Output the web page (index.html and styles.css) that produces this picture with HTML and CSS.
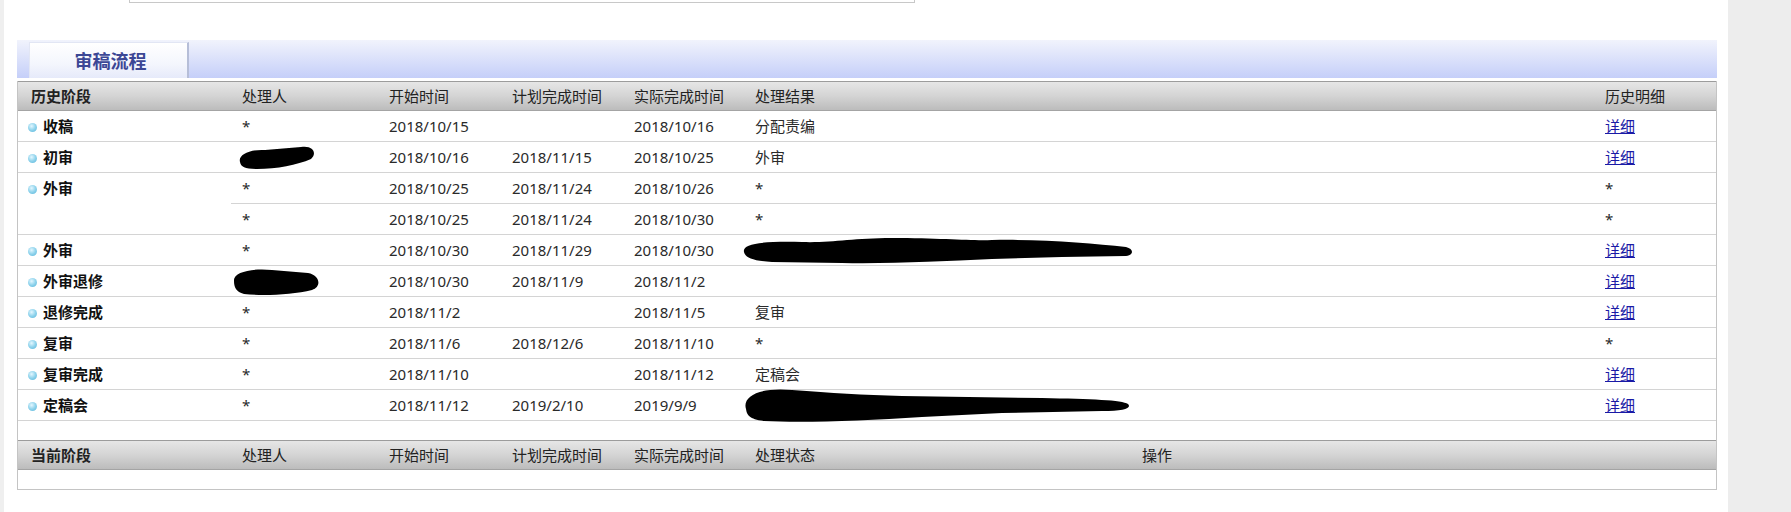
FILE: index.html
```html
<!DOCTYPE html>
<html lang="zh-CN">
<head>
    <meta charset="UTF-8">
    <title>审稿流程</title>
    <link rel="stylesheet" href="styles.css">
</head>
<body>
    <div class="page">
        <div class="main">
            <div class="top-box"></div>

            <div class="panel">
                <div class="tab-bar">
                    <div class="tab">审稿流程</div>
                </div>

                <table class="flow history">
                    <colgroup>
                        <col class="c-stage"><col class="c-user"><col class="c-date"><col class="c-date2"><col class="c-date3"><col class="c-result"><col class="c-detail">
                    </colgroup>
                    <thead>
                        <tr>
                            <th class="first">历史阶段</th>
                            <th>处理人</th>
                            <th>开始时间</th>
                            <th>计划完成时间</th>
                            <th>实际完成时间</th>
                            <th>处理结果</th>
                            <th>历史明细</th>
                        </tr>
                    </thead>
                    <tbody>
                        <tr>
                            <td class="stage"><i class="dot"></i>收稿</td>
                            <td>*</td>
                            <td>2018/10/15</td>
                            <td></td>
                            <td>2018/10/16</td>
                            <td>分配责编</td>
                            <td><a href="#">详细</a></td>
                        </tr>
                        <tr>
                            <td class="stage"><i class="dot"></i>初审</td>
                            <td>
                                <svg class="scribble" width="80" height="30" viewBox="0 0 80 30"><path d="M3 20 C1 13 12 7 28 8 L64 5 C77 3 80 12 74 17 C60 23 40 27 20 27 C8 27 4 25 3 20 Z"/></svg>
                            </td>
                            <td>2018/10/16</td>
                            <td>2018/11/15</td>
                            <td>2018/10/25</td>
                            <td>外审</td>
                            <td><a href="#">详细</a></td>
                        </tr>
                        <tr>
                            <td class="stage" rowspan="2"><i class="dot"></i>外审</td>
                            <td>*</td>
                            <td>2018/10/25</td>
                            <td>2018/11/24</td>
                            <td>2018/10/26</td>
                            <td>*</td>
                            <td>*</td>
                        </tr>
                        <tr>
                            <td>*</td>
                            <td>2018/10/25</td>
                            <td>2018/11/24</td>
                            <td>2018/10/30</td>
                            <td>*</td>
                            <td>*</td>
                        </tr>
                        <tr>
                            <td class="stage"><i class="dot"></i>外审</td>
                            <td>*</td>
                            <td>2018/10/30</td>
                            <td>2018/11/29</td>
                            <td>2018/10/30</td>
                            <td>
                                <svg class="scribble wide" width="392" height="30" viewBox="0 0 392 30"><path d="M2 17 C0 9 18 6 60 7 C90 8 110 3 150 3 C200 3 230 6 250 5 C300 4 350 8 384 12 C392 14 392 20 384 21 L320 22 L250 24 C200 26 150 29 100 28 L30 27 C10 26 3 22 2 17 Z"/></svg>
                            </td>
                            <td><a href="#">详细</a></td>
                        </tr>
                        <tr>
                            <td class="stage"><i class="dot"></i>外审退修</td>
                            <td>
                                <svg class="scribble fat" width="90" height="30" viewBox="0 0 90 30"><path d="M2 15 C1 6 20 2 40 4 L76 7 C88 9 90 21 80 24 C60 29 30 30 12 28 C4 26 2 21 2 15 Z"/></svg>
                            </td>
                            <td>2018/10/30</td>
                            <td>2018/11/9</td>
                            <td>2018/11/2</td>
                            <td></td>
                            <td><a href="#">详细</a></td>
                        </tr>
                        <tr>
                            <td class="stage"><i class="dot"></i>退修完成</td>
                            <td>*</td>
                            <td>2018/11/2</td>
                            <td></td>
                            <td>2018/11/5</td>
                            <td>复审</td>
                            <td><a href="#">详细</a></td>
                        </tr>
                        <tr>
                            <td class="stage"><i class="dot"></i>复审</td>
                            <td>*</td>
                            <td>2018/11/6</td>
                            <td>2018/12/6</td>
                            <td>2018/11/10</td>
                            <td>*</td>
                            <td>*</td>
                        </tr>
                        <tr>
                            <td class="stage"><i class="dot"></i>复审完成</td>
                            <td>*</td>
                            <td>2018/11/10</td>
                            <td></td>
                            <td>2018/11/12</td>
                            <td>定稿会</td>
                            <td><a href="#">详细</a></td>
                        </tr>
                        <tr>
                            <td class="stage"><i class="dot"></i>定稿会</td>
                            <td>*</td>
                            <td>2018/11/12</td>
                            <td>2019/2/10</td>
                            <td>2019/9/9</td>
                            <td>
                                <svg class="scribble wide" width="390" height="30" viewBox="0 0 390 30"><path d="M4 19 C0 6 18 -3 50 0 C90 3 120 5 160 6 L300 8 C350 9 380 10 386 14 C390 18 382 21 360 21 L260 23 L180 27 C120 31 60 33 22 31 C7 29 5 25 4 19 Z"/></svg>
                            </td>
                            <td><a href="#">详细</a></td>
                        </tr>
                        <tr class="spacer">
                            <td colspan="7"></td>
                        </tr>
                    </tbody>
                </table>

                <table class="flow current">
                    <colgroup>
                        <col class="c-stage"><col class="c-user"><col class="c-date"><col class="c-date2"><col class="c-date3"><col class="c-state"><col class="c-op">
                    </colgroup>
                    <thead>
                        <tr>
                            <th class="first">当前阶段</th>
                            <th>处理人</th>
                            <th>开始时间</th>
                            <th>计划完成时间</th>
                            <th>实际完成时间</th>
                            <th>处理状态</th>
                            <th>操作</th>
                        </tr>
                    </thead>
                    <tbody>
                        <tr class="empty">
                            <td colspan="7"></td>
                        </tr>
                    </tbody>
                </table>
            </div>
        </div>
        <div class="side"></div>
    </div>
</body>
</html>
```

FILE: styles.css
```css
html, body {
    margin: 0;
    padding: 0;
    height: 100%;
}
body {
    font-family: "Noto Sans", "Noto Sans CJK SC", sans-serif;
    font-size: 15px;
    color: #222;
    background-color: #fff;
}
.page {
    display: flex;
    height: 100vh;
}
.main {
    flex: 1;
    border-left: 4px solid #efefef;
    padding: 0 11px 0 13px;
}
.side {
    width: 63px;
    background-color: #ededed;
}
.top-box {
    width: 784px;
    height: 2px;
    margin-left: 112px;
    border: 1px solid #c8c8c8;
    border-top: none;
}
.panel {
    margin-top: 37px;
    width: 1700px;
}
.tab-bar {
    height: 36px;
    padding: 2px 0 0 12px;
    background: linear-gradient(to bottom, #f1f3fc, #c5cff9);
    margin-bottom: 3px;
}
.tab {
    width: 160px;
    height: 36px;
    box-sizing: border-box;
    border: 1px solid #e2e6f4;
    border-right: 2px solid #b6bed8;
    border-bottom: none;
    padding-left: 4px;
    background: linear-gradient(to bottom, #ffffff, #f4f6fd 60%, #e6eafa);
    text-align: center;
    font-family: "Noto Sans CJK SC", sans-serif;
    font-size: 18px;
    font-weight: bold;
    line-height: 34px;
    color: #3c4795;
}
.flow {
    width: 1700px;
    table-layout: fixed;
    border-collapse: separate;
    border-spacing: 0;
    border-left: 1px solid #c4c4c4;
    border-right: 1px solid #c4c4c4;
}
.flow.current {
    border-bottom: 1px solid #c4c4c4;
}
.c-stage { width: 213px; }
.c-user { width: 147px; }
.c-date { width: 123px; }
.c-date2 { width: 122px; }
.c-date3 { width: 121px; }
.c-result { width: 850px; }
.c-detail { width: 122px; }
.c-state { width: 387px; }
.c-op { width: 585px; }
.flow th {
    height: 28px;
    padding: 0 0 0 11px;
    text-align: left;
    font-weight: normal;
    color: #222;
    line-height: 28px;
    white-space: nowrap;
    background: linear-gradient(to bottom, #e6e6e6, #d4d4d4 50%, #bcbcbc);
    border-top: 1px solid #9c9c9c;
    border-bottom: 1px solid #a4a4a4;
}
.flow th.first {
    padding-left: 13px;
    font-weight: bold;
}
.flow td {
    height: 30px;
    padding: 0 0 0 11px;
    line-height: 30px;
    vertical-align: top;
    white-space: nowrap;
    color: #2a2a2a;
    border-bottom: 1px solid #d4d4d4;
}
.flow td.stage {
    padding-left: 10px;
    font-weight: bold;
    color: #111;
}
.dot {
    display: inline-block;
    width: 9px;
    height: 9px;
    margin-right: 6px;
    border-radius: 50%;
    background: radial-gradient(circle at 40% 35%, #e4f7ff, #8fd3ec 50%, #58b4da);
    vertical-align: 0;
}
.flow a {
    color: #1a1aa6;
    text-decoration: underline;
}
.scribble {
    display: block;
    margin-left: -5px;
    overflow: visible;
    fill: #000;
}
.scribble.fat {
    margin-left: -10px;
}
.scribble.wide {
    margin-left: -13px;
}
.flow .spacer td {
    height: 19px;
    line-height: 19px;
    border-bottom: none;
}
.flow .empty td {
    height: 19px;
    line-height: 19px;
    border-bottom: none;
}
```
